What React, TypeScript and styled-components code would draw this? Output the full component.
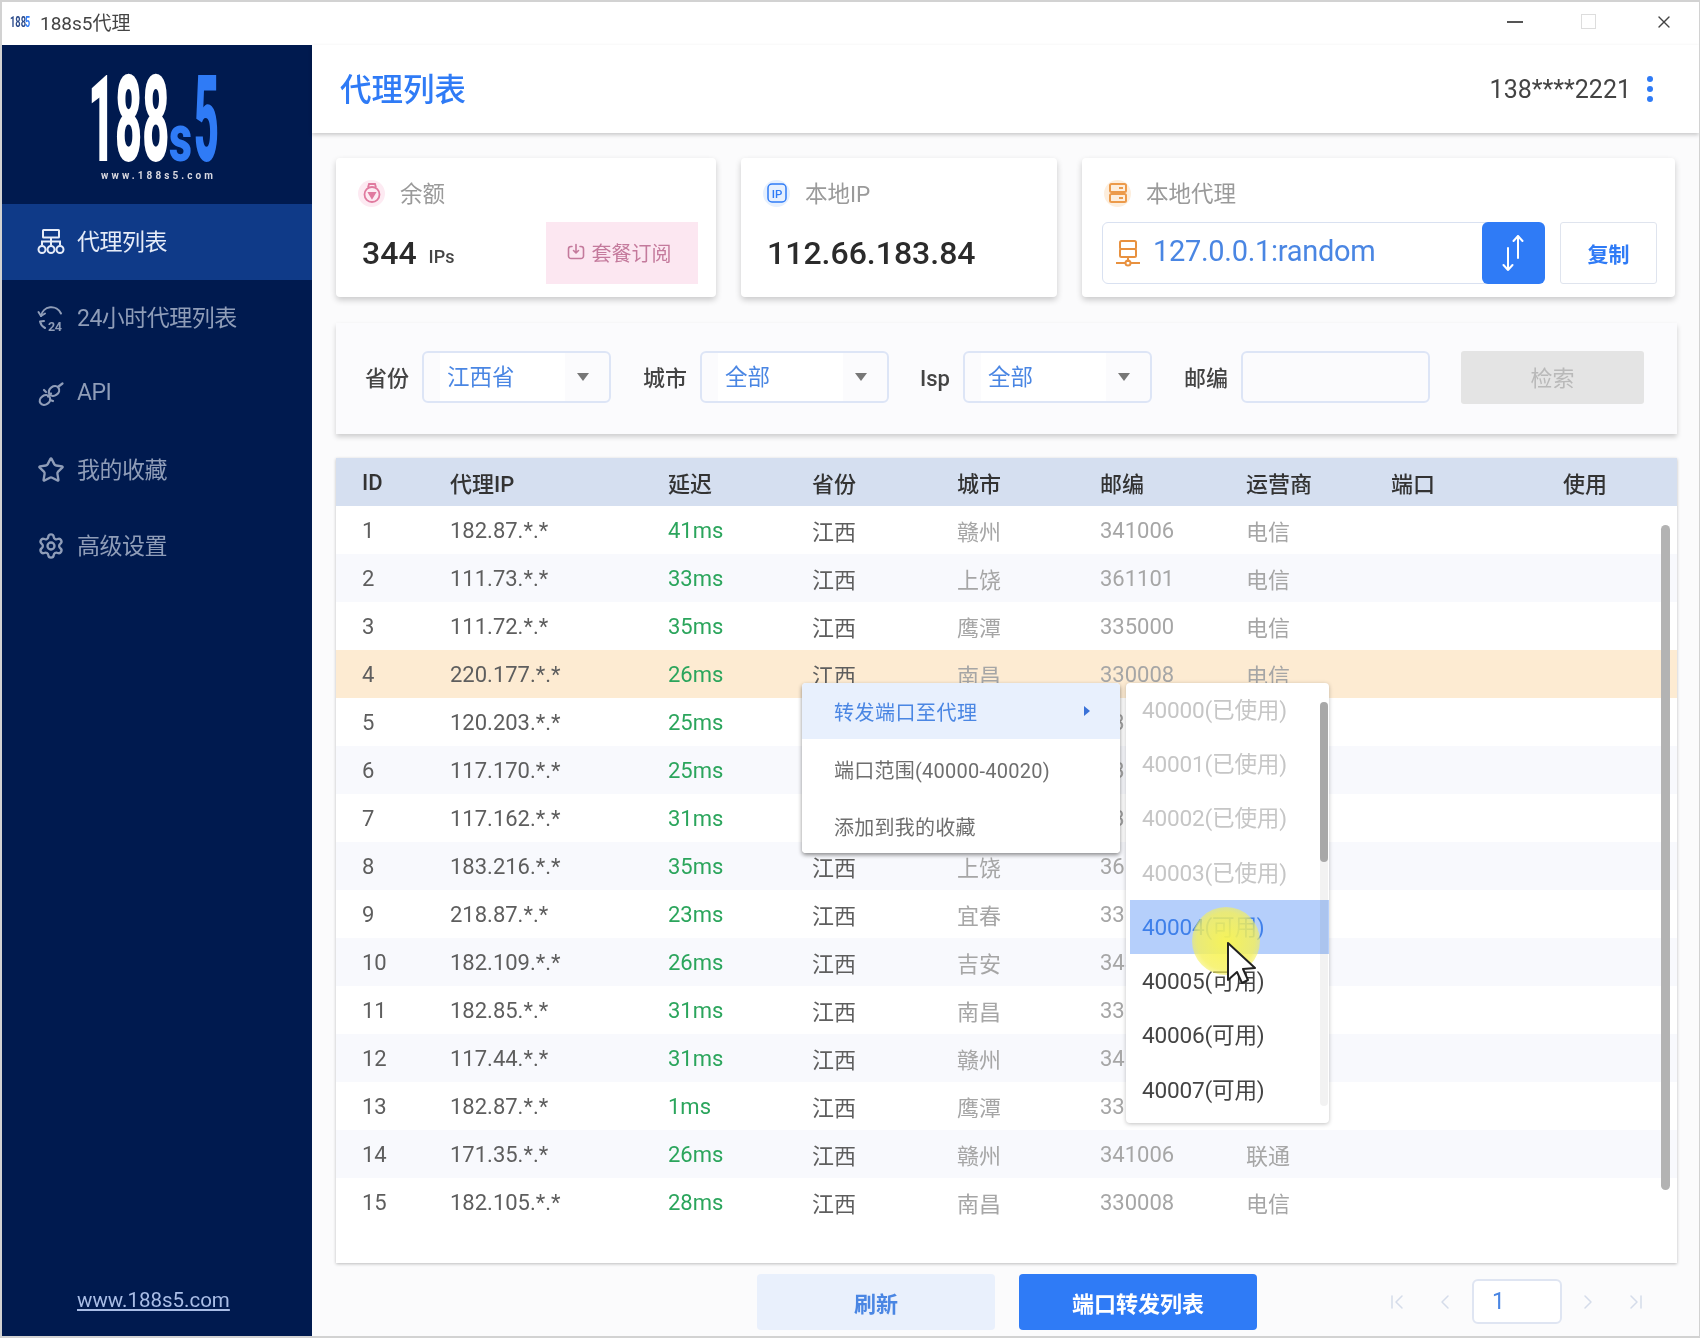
import React from 'react';
import styled, { createGlobalStyle } from 'styled-components';
import { ChevronFirst, ChevronLast, ChevronLeft, ChevronRight, Settings, Star, X } from 'lucide-react';

const GlobalStyle = createGlobalStyle`
  html, body { margin: 0; padding: 0; background: #fff; }
  body { font-family: Roboto, "Noto Sans CJK SC", sans-serif; }
`;

const blue = '#2f7bf6';

const Frame = styled.div`
  position: relative;
  box-sizing: border-box;
  width: 1700px;
  height: 1338px;
  border: solid #d2d2d2;
  border-width: 2px 1px 2px 2px;
  background: #fbfbfc;
  display: flex;
  flex-direction: column;
  overflow: hidden;
  filter: blur(0.55px);
`;

const TitleBar = styled.div`
  height: 43px;
  flex: none;
  box-sizing: border-box;
  padding: 0 0 4px 8px;
  background: #fff;
  display: flex;
  align-items: center;
  font-size: 19px;
  color: #444;
`;

const AppName = styled.span`
  margin-left: 8px;
`;

const WindowControls = styled.div`
  margin-left: auto;
  display: flex;
  align-items: center;
  height: 100%;
  padding-right: 25px;
  gap: 58px;
`;

const MinimizeBar = styled.span`
  width: 16px;
  height: 2px;
  background: #555;
`;

const MaximizeBox = styled.span`
  width: 13px;
  height: 13px;
  border: 1px solid #ddd;
`;

const Body = styled.div`
  flex: 1;
  min-height: 0;
  display: flex;
`;

const Sidebar = styled.aside`
  width: 310px;
  flex: none;
  background: #001a4f;
  display: flex;
  flex-direction: column;
`;

const LogoBox = styled.div`
  height: 159px;
  flex: none;
`;

const MenuItem = styled.div<{ $active?: boolean }>`
  height: 76px;
  flex: none;
  display: flex;
  align-items: center;
  padding-left: 35px;
  gap: 12px;
  font-size: 23px;
  letter-spacing: -0.5px;
  color: ${({ $active }) => ($active ? '#e6ecf8' : '#8f9db8')};
  background: ${({ $active }) => ($active ? '#0f3a88' : 'transparent')};

  span {
    padding-bottom: 4px;
  }
`;

const SiteLink = styled.a`
  margin-top: auto;
  margin-bottom: 24px;
  margin-left: 75px;
  font-size: 20.5px;
  color: #a9bde6;
  text-decoration: underline;
`;

const Main = styled.main`
  flex: 1;
  min-width: 0;
  display: flex;
  flex-direction: column;
`;

const Header = styled.header`
  height: 88px;
  flex: none;
  background: #fff;
  display: flex;
  align-items: center;
  padding: 0 46px 0 28px;
  box-shadow: 0 2px 4px rgba(0, 0, 0, 0.2);
`;

const PageTitle = styled.h1`
  margin: -4px 0 0;
  font-size: 31.5px;
  font-weight: 500;
  color: ${blue};
`;

const UserName = styled.span`
  margin-left: auto;
  font-size: 25px;
  color: #444;
`;

const MoreDots = styled.span`
  margin-left: 16px;
  display: flex;
  flex-direction: column;
  gap: 4px;

  i {
    width: 6px;
    height: 6px;
    border-radius: 50%;
    background: ${blue};
  }
`;

const Content = styled.div`
  flex: 1;
  min-height: 0;
  display: flex;
  flex-direction: column;
  padding: 25px 22px 0 24px;
`;

const CardRow = styled.div`
  display: flex;
  gap: 25px;
  height: 139px;
  flex: none;
`;

const Card = styled.section<{ $width: number }>`
  width: ${({ $width }) => $width}px;
  flex: none;
  box-sizing: border-box;
  padding: 20px 18px 0 20px;
  background: #fff;
  border-radius: 4px;
  box-shadow: 0 3px 6px rgba(0, 0, 0, 0.2);
`;

const CardHead = styled.div`
  height: 30px;
  display: flex;
  align-items: center;
  gap: 15px;
  font-size: 22.5px;
  color: #9a9a9a;
  margin-left: 2px;

  b {
    font-weight: 400;
    padding-bottom: 2px;
  }
`;

const IconBadge = styled.span<{ $tint: string }>`
  width: 27px;
  height: 27px;
  border-radius: 50%;
  background: ${({ $tint }) => $tint};
  display: flex;
  align-items: center;
  justify-content: center;
`;

const CardBody = styled.div`
  margin-top: 14px;
  height: 62px;
  display: flex;
  align-items: center;
`;

const BigValue = styled.span`
  font-size: 32px;
  font-weight: 500;
  color: #2b2b2b;
  margin-left: 6px;
`;

const Unit = styled.span`
  margin-left: 12px;
  font-size: 18px;
  font-weight: 500;
  color: #444;
  align-self: center;
  padding-top: 6px;
`;

const SubscribeButton = styled.button`
  margin-left: auto;
  width: 152px;
  height: 62px;
  border: none;
  padding: 0 6px 2px 0;
  background: #fce7f1;
  color: #c47a9c;
  font: inherit;
  font-size: 20px;
  display: flex;
  align-items: center;
  justify-content: center;
  gap: 7px;
`;

const ProxyField = styled.div`
  width: 442px;
  height: 62px;
  box-sizing: border-box;
  border: 1.5px solid #d9e1f1;
  border-radius: 6px;
  display: flex;
  align-items: center;
  padding-left: 12px;
`;

const ProxyAddress = styled.span`
  margin-left: 12px;
  padding-bottom: 4px;
  font-size: 29px;
  letter-spacing: -0.3px;
  color: #4a86e3;
`;

const SwapButton = styled.span`
  margin-left: auto;
  width: 63px;
  height: 62px;
  flex: none;
  margin-right: -1.5px;
  border-radius: 6px;
  background: ${blue};
  display: flex;
  align-items: center;
  justify-content: center;
`;

const CopyButton = styled.button`
  margin-left: 16px;
  width: 97px;
  height: 62px;
  background: #fff;
  border: 1.5px solid #dfe4ee;
  border-radius: 3px;
  color: ${blue};
  font: inherit;
  font-weight: 700;
  font-size: 21px;
`;

const FilterPanel = styled.section`
  height: 111px;
  flex: none;
  margin-top: 26px;
  box-sizing: border-box;
  padding: 28px 33px 0 29px;
  background: #fbfbfd;
  display: flex;
  align-items: flex-start;
  box-shadow: 0 3px 5px rgba(0, 0, 0, 0.18);
`;

const FilterLabel = styled.label<{ $gap: number }>`
  height: 52px;
  line-height: 56px;
  margin-right: 13px;
  margin-left: ${({ $gap }) => $gap}px;
  font-size: 22px;
  font-weight: 500;
  color: #444;
`;

const Select = styled.div`
  box-sizing: border-box;
  width: 189px;
  height: 52px;
  border: 2px solid #dde5f6;
  border-radius: 6px;
  display: flex;
  align-items: center;
  justify-content: space-between;
  padding: 0 20px 0 16px;
`;

const SelectValue = styled.span`
  flex: 1;
  height: 48px;
  line-height: 48px;
  background: #fff;
  padding-left: 7px;
  margin-right: 12px;
  font-size: 22.5px;
  color: #4a86e3;
`;

const CaretDown = styled.span`
  width: 0;
  height: 0;
  border-left: 6px solid transparent;
  border-right: 6px solid transparent;
  border-top: 8px solid #777;
`;

const ZipInput = styled.div`
  box-sizing: border-box;
  width: 189px;
  height: 52px;
  border: 2px solid #dde5f6;
  border-radius: 6px;
`;

const SearchButton = styled.button`
  margin-left: auto;
  width: 183px;
  height: 53px;
  border: none;
  padding: 0 0 4px;
  border-radius: 3px;
  background: #e4e4e4;
  color: #b9b9b9;
  font: inherit;
  font-size: 22px;
`;

const TableCard = styled.section`
  position: relative;
  height: 805px;
  flex: none;
  margin-top: 24px;
  background: #fff;
  box-shadow: 0 1px 3px rgba(0, 0, 0, 0.25);
`;

const Row = styled.div<{ $kind: 'head' | 'plain' | 'alt' | 'hot' }>`
  height: 48px;
  display: grid;
  grid-template-columns: 88px 218px 144px 145px 143px 146px 145px 172px 1fr;
  align-items: center;
  padding-left: 26px;
  font-size: 22px;
  background: ${({ $kind }) =>
    $kind === 'head' ? '#d5dff0' : $kind === 'hot' ? '#fdebd2' : $kind === 'alt' ? '#f8f9fd' : '#fff'};
`;

const Cell = styled.span<{ $tone: 'head' | 'dark' | 'green' | 'muted' }>`
  white-space: nowrap;
  color: ${({ $tone }) =>
    $tone === 'head' ? '#333' : $tone === 'green' ? '#2ba55c' : $tone === 'muted' ? '#a6a6a6' : '#5e5e5e'};
  font-weight: ${({ $tone }) => ($tone === 'head' ? 500 : 400)};
`;

const Scrollbar = styled.div`
  position: absolute;
  right: 7px;
  top: 67px;
  width: 9px;
  height: 665px;
  border-radius: 5px;
  background: #b3b3b3;
`;

const Footer = styled.div`
  flex: 1;
  display: flex;
  align-items: flex-start;
  padding-top: 11px;
`;

const FooterButton = styled.button<{ $primary?: boolean }>`
  width: 238px;
  height: 56px;
  margin-left: ${({ $primary }) => ($primary ? '24px' : '421px')};
  border: none;
  border-radius: 4px;
  background: ${({ $primary }) => ($primary ? blue : '#e9f0fc')};
  color: ${({ $primary }) => ($primary ? '#fff' : '#4a86e3')};
  font: inherit;
  font-size: 22px;
  font-weight: 700;
`;

const Pager = styled.div`
  margin-left: auto;
  margin-right: 17px;
  margin-top: 5px;
  display: flex;
  align-items: center;
  color: #d5dcea;
`;

const PageInput = styled.div`
  box-sizing: border-box;
  width: 90px;
  height: 45px;
  margin: 0 2px 0 3px;
  border: 2px solid #dfe5f2;
  border-radius: 6px;
  background: #fff;
  padding-left: 18px;
  line-height: 41px;
  font-size: 23px;
  color: #4a86e3;
`;

const PagerIcon = styled.span`
  display: flex;
  margin: 0 12px;
`;

const ContextMenu = styled.div`
  position: absolute;
  left: 800px;
  top: 681px;
  width: 318px;
  height: 170px;
  background: #fff;
  border-radius: 4px;
  box-shadow: 0 2px 4px rgba(0, 0, 0, 0.45);
  overflow: hidden;
`;

const ContextItem = styled.div<{ $active?: boolean }>`
  height: ${({ $active }) => ($active ? '56px' : '57px')};
  box-sizing: border-box;
  padding: ${({ $active }) => ($active ? '0 30px 0 32px' : '4px 30px 0 32px')};
  display: flex;
  align-items: center;
  justify-content: space-between;
  font-size: 20px;
  letter-spacing: ${({ $active }) => ($active ? '0.5px' : '0.25px')};
  color: ${({ $active }) => ($active ? '#4a86e3' : '#6e6e6e')};
  background: ${({ $active }) => ($active ? '#e8f0fd' : '#fff')};
`;

const CaretRight = styled.span`
  width: 0;
  height: 0;
  border-top: 5px solid transparent;
  border-bottom: 5px solid transparent;
  border-left: 6px solid #3a72d8;
`;

const PortMenu = styled.div`
  position: absolute;
  left: 1124px;
  top: 681px;
  width: 203px;
  height: 440px;
  background: #fff;
  border-radius: 4px;
  box-shadow: 0 1px 4px rgba(0, 0, 0, 0.25);
  overflow: hidden;
`;

const PortItem = styled.div<{ $state: 'used' | 'free' | 'hover' }>`
  height: 54.3px;
  box-sizing: border-box;
  display: flex;
  align-items: center;
  padding: 0 0 4px 12px;
  margin-left: 4px;
  font-size: 22.6px;
  letter-spacing: -0.2px;
  color: ${({ $state }) => ($state === 'used' ? '#c6c6c6' : $state === 'hover' ? '#3f80ea' : '#444')};
  background: ${({ $state }) => ($state === 'hover' ? '#b5cffb' : 'transparent')};
`;

const PortTrack = styled.div`
  position: absolute;
  right: 1px;
  top: 19px;
  bottom: 17px;
  width: 8px;
  border-radius: 4px;
  background: rgba(0, 0, 0, 0.05);
`;

const PortThumb = styled.div`
  height: 160px;
  border-radius: 4px;
  background: #a8a8a8;
`;

const CursorHalo = styled.div`
  position: absolute;
  left: 1190px;
  top: 905px;
  width: 68px;
  height: 68px;
  border-radius: 50%;
  background: radial-gradient(circle, rgba(250, 245, 80, 0.95) 0%, rgba(245, 240, 90, 0.8) 60%, rgba(245, 240, 120, 0) 100%);
`;

const CursorArrow = styled.svg`
  position: absolute;
  left: 1222px;
  top: 938px;
`;

const Logo = () => (
  <svg width="310" height="159" viewBox="0 0 310 159">
    <text transform="translate(86 116) scale(0.39 1)" fontFamily="Roboto" fontWeight="900" fontSize="120" fill="#fff">
      188
    </text>
    <text transform="translate(167 116) scale(0.68 1)" fontFamily="Roboto" fontWeight="900" fontSize="66" fill="#2f7bf6">
      s
    </text>
    <text transform="translate(192 116) scale(0.36 1)" fontFamily="Roboto" fontWeight="900" fontSize="120" fill="#2f7bf6">
      5
    </text>
    <text x="99" y="134" fontFamily="Roboto" fontWeight="700" fontSize="10" fill="#d8d8e0" letterSpacing="3.1">
      www.188s5.com
    </text>
  </svg>
);

const TinyLogo = () => (
  <svg width="22" height="18" viewBox="0 0 22 18">
    <text transform="translate(0 14) scale(0.62 1)" fontFamily="Roboto" fontWeight="700" fontSize="15" fill="#2b4a8a">
      188
    </text>
    <text transform="translate(15 14) scale(0.6 1)" fontFamily="Roboto" fontWeight="700" fontSize="15" fill="#2f7bf6">
      5
    </text>
  </svg>
);

const ProxyIcon = () => (
  <svg width="28" height="28" viewBox="0 0 28 28" fill="none" stroke="currentColor" strokeWidth="2">
    <rect x="6" y="2" width="16" height="7.500" rx="0.500" />
    <path d="M14 9.500v8M5 17v-3.500h18V17" />
    <circle cx="5" cy="21.500" r="3.500" />
    <circle cx="14" cy="21.500" r="3.500" />
    <circle cx="23" cy="21.500" r="3.500" />
  </svg>
);

const HistoryIcon = () => (
  <svg width="28" height="28" viewBox="0 0 28 28" fill="none" stroke="currentColor" strokeWidth="2" strokeLinecap="round" strokeLinejoin="round">
    <path d="M4 12a10.500 10.500 0 0 1 20-2.500" />
    <path d="M1.500 8L4 12l4-2.500" />
    <path d="M3 17.500a10 10 0 0 0 5 6.500M3 17.500l4-.5" />
    <text x="11" y="26.500" fontFamily="Roboto" fontWeight="700" fontSize="12.500" fill="currentColor" stroke="none">
      24
    </text>
  </svg>
);

const LinkIcon = () => (
  <svg width="28" height="28" viewBox="0 0 28 28" fill="none" stroke="currentColor" strokeWidth="2.200">
    <ellipse cx="8" cy="20" rx="5.500" ry="4.500" transform="rotate(-35 8 20)" />
    <ellipse cx="17" cy="11" rx="5.500" ry="4.500" transform="rotate(-35 17 11)" />
    <path d="M11 16.500l3-3M21.500 6.500l4-3M13 20l3 1M7 10l2 2" strokeLinecap="round" />
  </svg>
);

const PigIcon = () => (
  <svg width="20" height="22" viewBox="0 0 20 22" fill="none" stroke="#e07a9f" strokeWidth="1.800">
    <circle cx="10" cy="12.500" r="7.500" />
    <path d="M6 5.500l1-3.500h6l1 3.500" />
    <path d="M7 11l3 5 3-5z" fill="#e07a9f" />
  </svg>
);

const IpIcon = () => (
  <svg width="20" height="20" viewBox="0 0 20 20">
    <rect x="1" y="1" width="18" height="18" rx="4" fill="none" stroke="#2f7bf6" strokeWidth="1.500" />
    <text x="10" y="14.500" textAnchor="middle" fontFamily="Roboto" fontWeight="500" fontSize="11.500" fill="#2f7bf6">
      IP
    </text>
  </svg>
);

const ServerIcon = () => (
  <svg width="20" height="22" viewBox="0 0 20 22" fill="none" stroke="#ec9a4a" strokeWidth="2">
    <rect x="2" y="2" width="16" height="8" rx="1.500" />
    <rect x="2" y="12" width="16" height="8" rx="1.500" />
    <path d="M11 6h4M11 16h4" />
  </svg>
);

const NodeIcon = () => (
  <svg width="26" height="28" viewBox="0 0 26 28" fill="none" stroke="#e8913f" strokeWidth="2">
    <rect x="5" y="2" width="16" height="8" rx="1.500" />
    <rect x="5" y="10" width="16" height="8" rx="1.500" />
    <path d="M13 18v5M1 24h9M16 24h9" />
    <circle cx="13" cy="24" r="2.500" />
  </svg>
);

const SwapIcon = () => (
  <svg width="30" height="38" viewBox="0 0 30 38" fill="none" stroke="#fff" strokeWidth="2" strokeLinecap="round" strokeLinejoin="round">
    <path d="M20 24V2M15.500 7L20 2l4.500 5" />
    <path d="M10 14v22M5.500 31l4.500 5 4.500-5" />
  </svg>
);

const PowerIcon = () => (
  <svg width="18" height="18" viewBox="0 0 18 18" fill="none" stroke="#c47a9c" strokeWidth="1.600" strokeLinecap="round" strokeLinejoin="round">
    <path d="M5 3.500H4a2.500 2.500 0 0 0-2.500 2.500v7A2.500 2.500 0 0 0 4 15.500h10a2.500 2.500 0 0 0 2.500-2.500V6A2.500 2.500 0 0 0 14 3.500h-1" />
    <path d="M9 1.500v8M6.500 7.500L9 10l2.500-2.500" />
  </svg>
);

const menu = [
  { label: '代理列表', icon: <ProxyIcon />, active: true },
  { label: '24小时代理列表', icon: <HistoryIcon /> },
  { label: 'API', icon: <LinkIcon /> },
  { label: '我的收藏', icon: <Star size={28} strokeWidth={2} /> },
  { label: '高级设置', icon: <Settings size={28} strokeWidth={2} /> },
];

const columns = ['ID', '代理IP', '延迟', '省份', '城市', '邮编', '运营商', '端口', '使用'];

const rows = [
  ['182.87.*.*', '41ms', '赣州', '341006', '电信'],
  ['111.73.*.*', '33ms', '上饶', '361101', '电信'],
  ['111.72.*.*', '35ms', '鹰潭', '335000', '电信'],
  ['220.177.*.*', '26ms', '南昌', '330008', '电信'],
  ['120.203.*.*', '25ms', '南昌', '330008', '电信'],
  ['117.170.*.*', '25ms', '南昌', '330008', '电信'],
  ['117.162.*.*', '31ms', '南昌', '330008', '电信'],
  ['183.216.*.*', '35ms', '上饶', '361101', '电信'],
  ['218.87.*.*', '23ms', '宜春', '336000', '电信'],
  ['182.109.*.*', '26ms', '吉安', '343000', '电信'],
  ['182.85.*.*', '31ms', '南昌', '330008', '电信'],
  ['117.44.*.*', '31ms', '赣州', '341006', '电信'],
  ['182.87.*.*', '1ms', '鹰潭', '335000', '电信'],
  ['171.35.*.*', '26ms', '赣州', '341006', '联通'],
  ['182.105.*.*', '28ms', '南昌', '330008', '电信'],
];

const ports: { label: string; state: 'used' | 'free' | 'hover' }[] = [
  { label: '40000(已使用)', state: 'used' },
  { label: '40001(已使用)', state: 'used' },
  { label: '40002(已使用)', state: 'used' },
  { label: '40003(已使用)', state: 'used' },
  { label: '40004(可用)', state: 'hover' },
  { label: '40005(可用)', state: 'free' },
  { label: '40006(可用)', state: 'free' },
  { label: '40007(可用)', state: 'free' },
];

const filters = [
  { label: '省份', value: '江西省', gap: 0 },
  { label: '城市', value: '全部', gap: 32 },
  { label: 'Isp', value: '全部', gap: 31 },
];

const App = () => {
  return (
    <>
      <GlobalStyle />
      <Frame>
        <TitleBar>
          <TinyLogo />
          <AppName>188s5代理</AppName>
          <WindowControls>
            <MinimizeBar />
            <MaximizeBox />
            <X size={20} strokeWidth={1.6} color="#444" />
          </WindowControls>
        </TitleBar>
        <Body>
          <Sidebar>
            <LogoBox>
              <Logo />
            </LogoBox>
            {menu.map((item) => (
              <MenuItem key={item.label} $active={item.active}>
                {item.icon}
                <span>{item.label}</span>
              </MenuItem>
            ))}
            <SiteLink>www.188s5.com</SiteLink>
          </Sidebar>
          <Main>
            <Header>
              <PageTitle>代理列表</PageTitle>
              <UserName>138****2221</UserName>
              <MoreDots>
                <i />
                <i />
                <i />
              </MoreDots>
            </Header>
            <Content>
              <CardRow>
                <Card $width={380}>
                  <CardHead>
                    <IconBadge $tint="#fdeaf2">
                      <PigIcon />
                    </IconBadge>
                    <b>余额</b>
                  </CardHead>
                  <CardBody>
                    <BigValue>344</BigValue>
                    <Unit>IPs</Unit>
                    <SubscribeButton>
                      <PowerIcon />
                      套餐订阅
                    </SubscribeButton>
                  </CardBody>
                </Card>
                <Card $width={316}>
                  <CardHead>
                    <IconBadge $tint="#e6f0fe">
                      <IpIcon />
                    </IconBadge>
                    <b>本地IP</b>
                  </CardHead>
                  <CardBody>
                    <BigValue>112.66.183.84</BigValue>
                  </CardBody>
                </Card>
                <Card $width={593}>
                  <CardHead>
                    <IconBadge $tint="#fdeedd">
                      <ServerIcon />
                    </IconBadge>
                    <b>本地代理</b>
                  </CardHead>
                  <CardBody>
                    <ProxyField>
                      <NodeIcon />
                      <ProxyAddress>127.0.0.1:random</ProxyAddress>
                      <SwapButton>
                        <SwapIcon />
                      </SwapButton>
                    </ProxyField>
                    <CopyButton>复制</CopyButton>
                  </CardBody>
                </Card>
              </CardRow>
              <FilterPanel>
                {filters.map((filter) => (
                  <React.Fragment key={filter.label}>
                    <FilterLabel $gap={filter.gap}>{filter.label}</FilterLabel>
                    <Select>
                      <SelectValue>{filter.value}</SelectValue>
                      <CaretDown />
                    </Select>
                  </React.Fragment>
                ))}
                <FilterLabel $gap={32}>邮编</FilterLabel>
                <ZipInput />
                <SearchButton>检索</SearchButton>
              </FilterPanel>
              <TableCard>
                <Row $kind="head">
                  {columns.map((column) => (
                    <Cell key={column} $tone="head">
                      {column}
                    </Cell>
                  ))}
                </Row>
                {rows.map((row, index) => (
                  <Row key={index} $kind={index === 3 ? 'hot' : index % 2 === 1 ? 'alt' : 'plain'}>
                    <Cell $tone="dark">{index + 1}</Cell>
                    <Cell $tone="dark">{row[0]}</Cell>
                    <Cell $tone="green">{row[1]}</Cell>
                    <Cell $tone="dark">江西</Cell>
                    <Cell $tone="muted">{row[2]}</Cell>
                    <Cell $tone="muted">{row[3]}</Cell>
                    <Cell $tone="muted">{row[4]}</Cell>
                  </Row>
                ))}
                <Scrollbar />
              </TableCard>
              <Footer>
                <FooterButton>刷新</FooterButton>
                <FooterButton $primary>端口转发列表</FooterButton>
                <Pager>
                  <PagerIcon>
                    <ChevronFirst size={24} strokeWidth={1.5} />
                  </PagerIcon>
                  <PagerIcon>
                    <ChevronLeft size={24} strokeWidth={1.5} />
                  </PagerIcon>
                  <PageInput>1</PageInput>
                  <PagerIcon>
                    <ChevronRight size={24} strokeWidth={1.5} />
                  </PagerIcon>
                  <PagerIcon>
                    <ChevronLast size={24} strokeWidth={1.5} />
                  </PagerIcon>
                </Pager>
              </Footer>
            </Content>
          </Main>
        </Body>
        <ContextMenu>
          <ContextItem $active>
            转发端口至代理
            <CaretRight />
          </ContextItem>
          <ContextItem>端口范围(40000-40020)</ContextItem>
          <ContextItem>添加到我的收藏</ContextItem>
        </ContextMenu>
        <PortMenu>
          {ports.map((port) => (
            <PortItem key={port.label} $state={port.state}>
              {port.label}
            </PortItem>
          ))}
          <PortTrack>
            <PortThumb />
          </PortTrack>
        </PortMenu>
        <CursorHalo />
        <CursorArrow width="36" height="46" viewBox="0 0 36 46">
          <path d="M4 3v37l9-8 5 11 6-3-5-11 12-1z" fill="#fff" stroke="#222" strokeWidth="2" strokeLinejoin="round" />
        </CursorArrow>
      </Frame>
    </>
  );
};

export default App;
